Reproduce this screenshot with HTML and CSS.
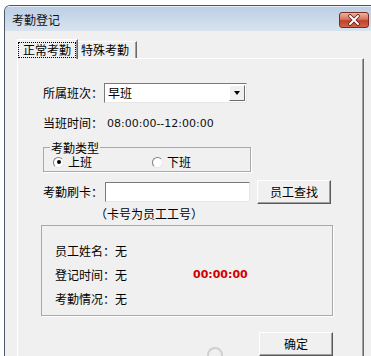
FILE: index.html
```html
<!DOCTYPE html>
<html lang="zh-CN">
<head>
  <meta charset="utf-8">
  <title>考勤登记</title>
<link rel="stylesheet" href="styles.css">
</head>
<body>
	<div class="window">
		<div class="titlebar">
			<span class="title">考勤登记</span>
			<span class="close">
				<svg width="28" height="14" viewBox="0 0 28 14">
					<path d="M10 3 L18 11 M18 3 L10 11" stroke="#5a1a10" stroke-width="3.6" stroke-linecap="round"/>
					<path d="M10 3 L18 11 M18 3 L10 11" stroke="#fff" stroke-width="2" stroke-linecap="round"/>
				</svg>
			</span>
		</div>
		<div class="client">
			<div class="tabs">
				<span class="tab activo"><span class="foco">正常考勤</span></span>
				<span class="tab">特殊考勤</span>
			</div>
			<div class="panel">
				<div class="fila fila-banci">
					<label class="etiqueta">所属班次：</label>
					<div class="combo">
						<span class="combo-texto">早班</span>
						<span class="combo-btn"><span class="flecha"></span></span>
					</div>
				</div>
				<div class="fila fila-hora">
					<label class="etiqueta">当班时间：</label>
					<span class="hora">08:00:00--12:00:00</span>
				</div>
				<fieldset class="grupo">
					<legend>考勤类型</legend>
					<label class="radio primero"><span class="circulo marcado"></span>上班</label>
					<label class="radio"><span class="circulo"></span>下班</label>
				</fieldset>
				<div class="fila fila-tarjeta">
					<label class="etiqueta">考勤刷卡：</label>
					<div class="entrada"></div>
					<button class="btn btn-buscar">员工查找</button>
				</div>
				<div class="nota">（卡号为员工工号）</div>
				<div class="info">
					<div class="info-fila"><span>员工姓名：无</span></div>
					<div class="info-fila"><span class="col">登记时间：无</span><span class="reloj">00:00:00</span></div>
					<div class="info-fila"><span>考勤情况：无</span></div>
				</div>
				<div class="pie">
					<span class="marca"></span>
					<button class="btn btn-ok">确定</button>
				</div>
			</div>
		</div>
	</div>
</body>
</html>
```

FILE: styles.css
```css
*{
	margin: 0;
	padding: 0;
	box-sizing: border-box;
}

html, body{
	height: 356px;
	overflow: hidden;
}

body{
	background: #fff;
	font-family: "Noto Sans CJK SC", sans-serif;
	font-size: 12px;
	color: #000;
}

.window{
	margin: 5px 0 0 4px;
	width: 372px;
	height: 351px;
	border: 1px solid #4c5866;
	border-bottom: none;
	border-radius: 6px 6px 0 0;
	background: #f0f0f0;
	overflow: hidden;
}

.titlebar{
	height: 25px;
	display: flex;
	justify-content: space-between;
	align-items: flex-start;
	padding: 0 6px 0 7px;
	background: linear-gradient(#bccfe5, #d8e3ef);
	border-top: 1px solid #e4edf6;
}

.title{
	margin-top: 6px;
	line-height: 14px;
	color: #111;
}

.close{
	margin-top: 5px;
	width: 30px;
	height: 16px;
	border: 1px solid #7a2a1e;
	border-radius: 3px;
	background: linear-gradient(#eab3a4, #d9735a 45%, #c2412a 55%, #d0644a);
	display: flex;
	align-items: center;
	justify-content: center;
}

.client{
	padding: 8px 0 0 12px;
}

.tabs{
	display: flex;
	align-items: flex-start;
}

.tab{
	display: block;
	line-height: 16px;
	border: 1px solid #fff;
	border-bottom: none;
	border-right: 1px solid #6a6a6a;
	box-shadow: inset -1px 0 #a0a0a0;
}

.activo{
	position: relative;
	z-index: 1;
	width: 61px;
	height: 20px;
	margin-bottom: -1px;
	padding: 2px 0 0 0;
	background: #f0f0f0;
}

.foco{
	display: block;
	width: 58px;
	line-height: 14px;
	padding: 0 4px;
	border: 1px dotted #000;
}

.tab:not(.activo){
	margin-top: 2px;
	width: 59px;
	height: 17px;
	padding-left: 3px;
	border-left: none;
}

.panel{
	width: 347px;
	height: 300px;
	border: 1px solid #fff;
	border-right: 1px solid #6a6a6a;
	border-bottom: none;
	box-shadow: inset -1px 0 #a0a0a0;
	padding: 24px 0 0 25px;
	overflow: hidden;
}

.fila{
	display: flex;
	align-items: center;
}

.etiqueta{
	line-height: 14px;
	width: 60px;
}

.fila-banci{
	height: 20px;
}

.combo{
	margin-left: 1px;
	width: 143px;
	height: 20px;
	display: flex;
	align-items: stretch;
	background: #fff;
	border: 1px solid;
	border-color: #7a7a7a #e6e6e6 #e6e6e6 #7a7a7a;
	padding: 1px;
}

.combo-texto{
	flex: 1;
	padding-left: 2px;
	line-height: 16px;
}

.combo-btn{
	width: 16px;
	background: #f0f0f0;
	border: 1px solid;
	border-color: #fff #6a6a6a #6a6a6a #fff;
	display: flex;
	align-items: center;
	justify-content: center;
}

.flecha{
	width: 0;
	height: 0;
	border-left: 3.5px solid transparent;
	border-right: 3.5px solid transparent;
	border-top: 4px solid #000;
}

.fila-hora{
	margin-top: 12px;
	height: 16px;
}

.hora{
	margin-left: 4px;
	font-family: "DejaVu Sans", sans-serif;
	font-size: 11px;
	color: #111;
}

.grupo{
	margin-top: 10px;
	width: 208px;
	border: 1px solid #a9a9a9;
	box-shadow: 1px 1px 0 #fff;
	padding: 1px 0 2px 6px;
	display: flex;
	min-inline-size: 0;
}

.grupo legend{
	padding: 0 1px;
	line-height: 13px;
	margin-left: 0;
}

.radio{
	display: flex;
	align-items: center;
	line-height: 14px;
	gap: 4px;
}

.primero{
	margin-left: 3px;
	width: 99px;
}

.circulo{
	width: 11px;
	height: 11px;
	border-radius: 50%;
	border: 1px solid;
	border-color: #808080 #e8e8e8 #e8e8e8 #808080;
	background: #fff;
	display: flex;
	align-items: center;
	justify-content: center;
}

.marcado::after{
	content: "";
	width: 4px;
	height: 4px;
	border-radius: 50%;
	background: #000;
}

.fila-tarjeta{
	margin-top: 8px;
	height: 24px;
}

.entrada{
	margin-left: 2px;
	width: 145px;
	height: 20px;
	background: #fff;
	border: 1px solid;
	border-color: #7a7a7a #e6e6e6 #e6e6e6 #7a7a7a;
}

.btn{
	font-family: "Noto Sans CJK SC", sans-serif;
	font-size: 12px;
	line-height: 14px;
	color: #000;
	background: #f0f0f0;
	border: 1px solid;
	border-color: #fff #5a5a5a #5a5a5a #fff;
	box-shadow: inset -1px -1px #a0a0a0;
	width: 74px;
	height: 24px;
}

.btn-buscar{
	margin-left: 7px;
}

.nota{
	margin: 3px 0 0 52px;
	line-height: 14px;
}

.info{
	margin: 4px 0 0 -2px;
	width: 292px;
	height: 91px;
	border: 1px solid #a9a9a9;
	box-shadow: 1px 1px 0 #fff;
	padding: 12px 0 0 13px;
}

.info-fila{
	display: flex;
	align-items: center;
	height: 24px;
}

.col{
	width: 138px;
}

.reloj{
	font-family: "DejaVu Sans", sans-serif;
	font-weight: bold;
	font-size: 11px;
	color: #d40000;
}

.pie{
	margin: 16px 0 0 -2px;
	width: 292px;
	display: flex;
	align-items: flex-start;
}

.marca{
	margin: 15px 0 0 166px;
	width: 16px;
	height: 16px;
	border-radius: 50%;
	border: 2px solid #cfcfcf;
}

.btn-ok{
	margin-left: auto;
}
```
